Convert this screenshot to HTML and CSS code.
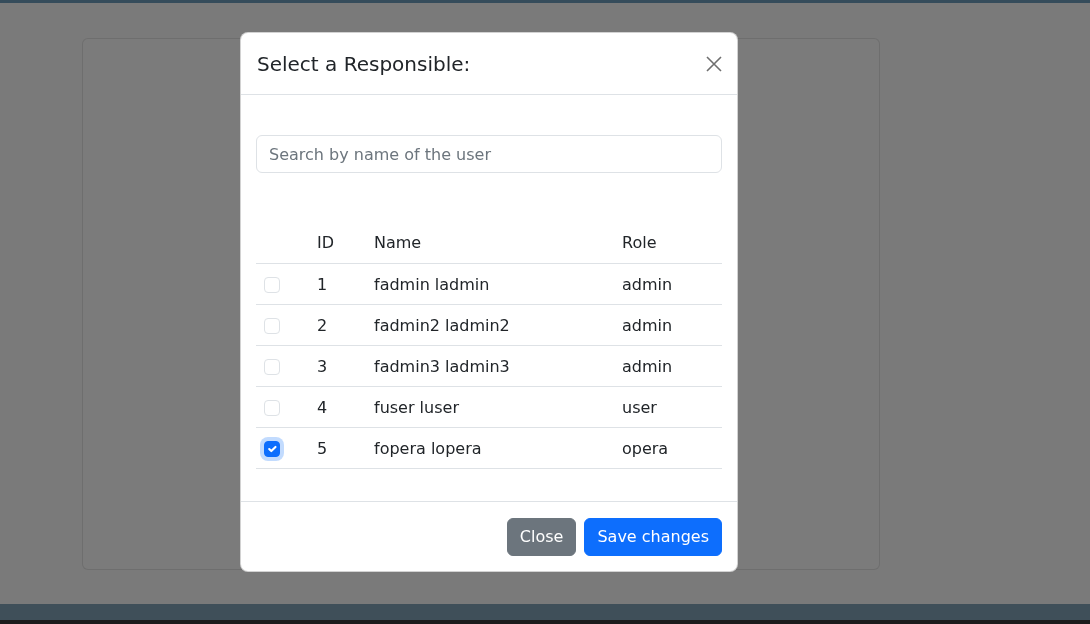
FILE: index.html
```html
<!DOCTYPE html>
<html lang="en">
<head>
<meta charset="utf-8">
<title>Select a Responsible</title>
<link rel="stylesheet" href="styles.css">
</head>
<body>
<div class="page">
  <div class="topbar"></div>
  <main class="content">
    <div class="card"></div>
  </main>
  <footer class="footer"></footer>
  <div class="footer-edge"></div>
</div>

<div class="backdrop"></div>

<div class="modal">
  <div class="modal-header">
    <h5 class="modal-title">Select a Responsible:</h5>
    <button class="btn-close" aria-label="Close">
      <svg viewBox="0 0 16 16" width="16" height="16"><path d="M1 1L15 15M15 1L1 15" stroke="currentColor" stroke-width="1.6" fill="none" stroke-linecap="butt"/></svg>
    </button>
  </div>
  <div class="modal-body">
    <input class="form-control" type="text" placeholder="Search by name of the user">
    <table class="table">
      <thead>
        <tr><th class="c-check"></th><th class="c-id">ID</th><th class="c-name">Name</th><th class="c-role">Role</th></tr>
      </thead>
      <tbody>
        <tr><td class="c-check"><span class="check"></span></td><td>1</td><td>fadmin ladmin</td><td>admin</td></tr>
        <tr><td class="c-check"><span class="check"></span></td><td>2</td><td>fadmin2 ladmin2</td><td>admin</td></tr>
        <tr><td class="c-check"><span class="check"></span></td><td>3</td><td>fadmin3 ladmin3</td><td>admin</td></tr>
        <tr><td class="c-check"><span class="check"></span></td><td>4</td><td>fuser luser</td><td>user</td></tr>
        <tr><td class="c-check"><span class="check checked"><svg viewBox="0 0 20 20" width="16" height="16"><path d="M6 10l3 3l6-6" fill="none" stroke="#fff" stroke-width="3" stroke-linecap="round" stroke-linejoin="round"/></svg></span></td><td>5</td><td>fopera lopera</td><td>opera</td></tr>
      </tbody>
    </table>
  </div>
  <div class="modal-footer">
    <button class="btn btn-secondary">Close</button>
    <button class="btn btn-primary">Save changes</button>
  </div>
</div>
</body>
</html>
```

FILE: styles.css
```css
* { box-sizing: border-box; }

html, body {
  margin: 0;
  padding: 0;
  width: 1090px;
  height: 624px;
  overflow: hidden;
}

body {
  font-family: "DejaVu Sans", sans-serif;
  font-size: 16px;
  line-height: 1.5;
  color: #212529;
  background: #f4f4f4;
}

.page {
  display: flex;
  flex-direction: column;
  height: 624px;
}

.topbar {
  height: 3px;
  background: #6a98b6;
}

.content {
  flex: 1;
  padding: 35px 0 0 82px;
}

.card {
  width: 798px;
  height: 532px;
  background: #f6f6f6;
  border: 1px solid rgba(0, 0, 0, 0.1);
  border-radius: 6px;
}

.footer {
  height: 16px;
  background: #7e9fb2;
}

.footer-edge {
  height: 4px;
  background: #383838;
}

.backdrop {
  position: fixed;
  inset: 0;
  background: rgba(0, 0, 0, 0.5);
}

.modal {
  position: absolute;
  left: 240px;
  top: 32px;
  width: 498px;
  height: 540px;
  background: #fff;
  border: 1px solid rgba(0, 0, 0, 0.175);
  border-radius: 8px;
  display: flex;
  flex-direction: column;
}

.modal-header {
  display: flex;
  align-items: center;
  justify-content: space-between;
  height: 62px;
  padding: 1px 15px 0 16px;
  border-bottom: 1px solid #dee2e6;
}

.modal-title {
  margin: 0;
  font-size: 20px;
  font-weight: 400;
  line-height: 1.5;
  color: #212529;
}

.btn-close {
  border: 0;
  background: transparent;
  padding: 0;
  width: 16px;
  height: 16px;
  color: #6f6f6f;
  display: flex;
}

.modal-body {
  flex: 1;
  padding: 40px 15px 16px 15px;
}

.form-control {
  display: block;
  width: 100%;
  height: 38px;
  padding: 6px 12px;
  font-family: inherit;
  font-size: 16px;
  color: #212529;
  border: 1px solid #dee2e6;
  border-radius: 6px;
  outline: none;
}

.form-control::placeholder {
  color: #6c757d;
}

.table {
  width: 100%;
  table-layout: fixed;
  margin-top: 49px;
  border-collapse: collapse;
}

.table th,
.table td {
  padding: 9px 8px 7px;
  text-align: left;
  font-weight: 400;
  border-bottom: 1px solid #dee2e6;
  height: 41px;
}

.c-check { width: 53px; }
.c-id { width: 57px; }
.c-name { width: 248px; }

.check {
  display: block;
  width: 16px;
  height: 16px;
  border: 1px solid #dee2e6;
  border-radius: 4px;
  background: #fff;
}

.check.checked {
  background: #0d6efd;
  border-color: #0d6efd;
  box-shadow: 0 0 0 4px rgba(13, 110, 253, 0.25);
  display: flex;
  align-items: center;
  justify-content: center;
}

.check.checked svg {
  width: 14px;
  height: 14px;
}

.modal-footer {
  display: flex;
  justify-content: flex-end;
  align-items: center;
  gap: 8px;
  padding: 16px 15px 15px;
  border-top: 1px solid #dee2e6;
}

.btn {
  font-family: inherit;
  font-size: 16px;
  line-height: 1.5;
  height: 38px;
  padding: 6px 12px;
  border-radius: 6px;
  border: 1px solid transparent;
  color: #fff;
}

.btn-secondary {
  background: #6c757d;
  border-color: #6c757d;
}

.btn-primary {
  background: #0d6efd;
  border-color: #0d6efd;
}
```
